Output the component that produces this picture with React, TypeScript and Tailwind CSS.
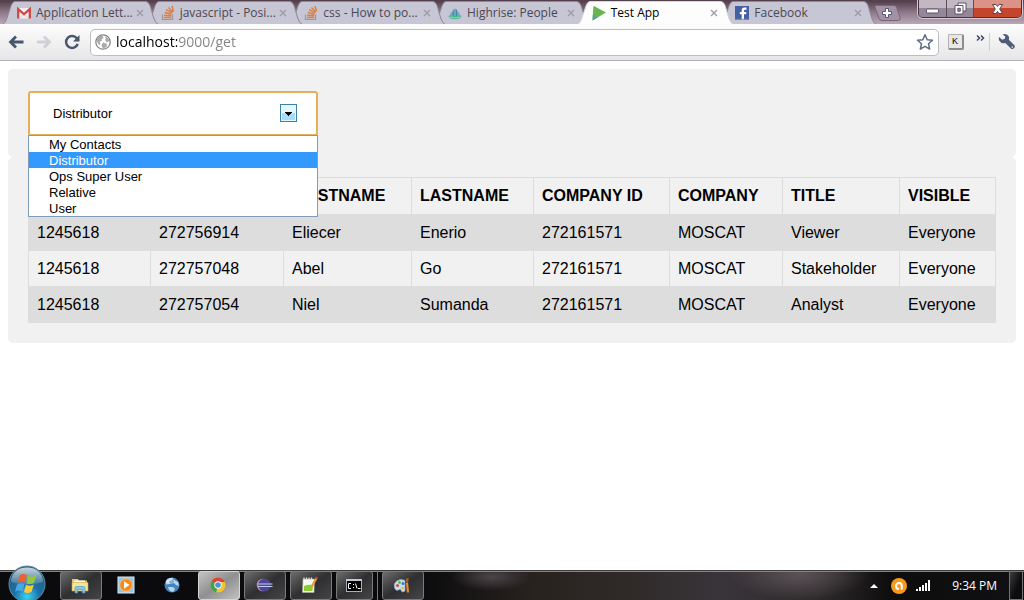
import React from "react";

type TabInfo = { title: string; icon: React.ReactNode; active?: boolean; z: string };

const GmailIcon = () => (
  <svg viewBox="0 0 16 16" className="h-4 w-4 shrink-0" aria-hidden="true">
    <rect x="1" y="3" width="14" height="10.500" rx="1" fill="#f0eef2" />
    <path d="M2.200 13.500V4l5.800 5.300L13.800 4v9.500" fill="none" stroke="#cf4440" strokeWidth="2.300" />
    <path d="M4.500 13l2.300-3.500M11.500 13L9.200 9.500" stroke="#d5c8cc" strokeWidth=".8" />
  </svg>
);

const StackIcon = () => (
  <svg viewBox="0 0 16 16" className="h-4 w-4 shrink-0" aria-hidden="true">
    <path d="M2.500 9.500v5h10v-5" fill="none" stroke="#9a959d" strokeWidth="1.200" />
    <g stroke="#df7d3d" strokeWidth="1.400">
      <path d="M4 12.500h7M4.200 10.300l7 .5M4.700 7.500l6.800 1.700M6 4.700l6 3.200M8.500 2.500l4.300 4.700M12 1l1.500 5.500" />
    </g>
  </svg>
);

const HighriseIcon = () => (
  <svg viewBox="0 0 16 16" className="h-4 w-4 shrink-0" aria-hidden="true">
    <ellipse cx="8" cy="11.500" rx="6.200" ry="2.800" fill="#52b592" />
    <path d="M3.500 11V8l2-1.500V5L8 3.500 10.500 5v1.500l2 1.500v3z" fill="#6fa6c2" />
    <path d="M6.300 6v5M9.500 5v6" stroke="#4a86a0" strokeWidth="1" />
    <path d="M3 12q5 1.800 10 0" stroke="#8fd0c5" fill="none" />
  </svg>
);

const PlayIcon = () => (
  <svg viewBox="0 0 16 16" className="h-4 w-4 shrink-0" aria-hidden="true">
    <path d="M2.500.8L15 7.500 1.500 15.500z" fill="#69b550" />
    <path d="M1.900 9l5 3.300-5.400 3.200z" fill="#5ba293" />
  </svg>
);

const FacebookIcon = () => (
  <svg viewBox="0 0 16 16" className="h-4 w-4 shrink-0" aria-hidden="true">
    <rect x="1" y="1" width="14" height="14" fill="#4560a0" />
    <path d="M10 15V9.300h2.200V7.100H10V5.700q0-1 1-1h1.500V2.500h-2.200Q7.700 2.500 7.700 5v2.100H5.800v2.200h1.900V15z" fill="#fff" />
    <path d="M1 14.300h14" stroke="#7690c6" />
  </svg>
);

const tabs: TabInfo[] = [
  { title: "Application Lett...", icon: <GmailIcon />, z: "z-[6]" },
  { title: "javascript - Posi...", icon: <StackIcon />, z: "z-[5]" },
  { title: "css - How to po...", icon: <StackIcon />, z: "z-[4]" },
  { title: "Highrise: People", icon: <HighriseIcon />, z: "z-[3]" },
  { title: "Test App", icon: <PlayIcon />, active: true, z: "z-[7]" },
  { title: "Facebook", icon: <FacebookIcon />, z: "z-[2]" },
];

function Tab({ title, icon, active, z }: TabInfo) {
  return (
    <div className={`relative h-6 min-w-0 flex-1 ${z}`}>
      <svg viewBox="0 0 157 24" preserveAspectRatio="none" className="absolute top-0 left-0 h-6 w-[calc(100%+13px)]" aria-hidden="true">
        <path
          d="M0 24.500C3 23.500 4 21 5 18L9 6Q10.500 1.500 13 1.500H144Q147 1.500 148.500 6L152 18Q154 24 157 24.500z"
          fill={active ? "#fdfdfd" : "#c7c6d4"}
          stroke={active ? "#d9d6dd" : "#8e8895"}
          strokeWidth="1"
        />
      </svg>
      <div className="relative flex h-6 items-center pt-0.5 pl-3.5">
        {icon}
        <button
          type="button"
          className={`ml-1 min-w-0 flex-1 text-left font-['Open_Sans','Noto_Sans',sans-serif] text-xs whitespace-nowrap ${active ? "text-black" : "text-[#4b4852]"}`}
        >
          {title}
        </button>
        <button type="button" aria-label={`Close ${title}`} className="flex h-3 w-3 shrink-0 items-center justify-center">
          <svg viewBox="0 0 8 8" className="h-2 w-2" aria-hidden="true">
            <path d="M1 1l6 6M7 1L1 7" stroke="#9f9ba6" strokeWidth="1.400" />
          </svg>
        </button>
      </div>
    </div>
  );
}

function WindowControls() {
  return (
    <div className="flex h-[18px] w-[104px] overflow-hidden rounded-b-[5px] border border-t-0 border-[#44343f] shadow-[0_0_0_1px_#d4c9d2]">
      <button type="button" aria-label="Minimize" className="flex w-7 items-center justify-center border-r border-[#5d4c59] bg-linear-to-b from-[#c3b7c2] from-45% to-[#95879a] to-50%">
        <svg viewBox="0 0 13 6" className="mt-1 h-1.5 w-[13px]" aria-hidden="true">
          <rect x=".5" y="1" width="12" height="4" rx="1" fill="#fff" stroke="#5b5567" />
        </svg>
      </button>
      <button type="button" aria-label="Restore" className="flex w-[27px] items-center justify-center border-r border-[#5d4c59] bg-linear-to-b from-[#c3b7c2] from-45% to-[#95879a] to-50%">
        <svg viewBox="0 0 13 13" className="h-[13px] w-[13px]" aria-hidden="true">
          <path d="M4 1h8v8H4z" fill="#fff" stroke="#5b5567" />
          <path d="M1 3.500h8V12H1z" fill="#fff" stroke="#5b5567" />
          <path d="M3.800 6.300h2.500v3H3.800z" fill="#9a8c9b" stroke="#5b5567" />
        </svg>
      </button>
      <button type="button" aria-label="Close window" className="flex flex-1 items-center justify-center bg-linear-to-b from-[#dc9387] from-45% to-[#c5452c] to-50%">
        <svg viewBox="0 0 13 12" className="h-3 w-[13px]" aria-hidden="true">
          <path d="M1.500 1.500H5l1.500 2 1.500-2h3.500L8.700 6l2.800 4.500H8l-1.500-2-1.500 2H1.500L4.300 6z" fill="#fff" stroke="#5c4450" />
        </svg>
      </button>
    </div>
  );
}

function TabStrip() {
  return (
    <header className="flex h-6 bg-linear-to-b from-[#54404d] from-5% via-[#8d7788] to-[#b9a9b8] pl-0.5">
      <nav aria-label="Tabs" className="isolate flex min-w-0 flex-1">
        {tabs.map((t) => (
          <Tab key={t.title} {...t} />
        ))}
      </nav>
      <div className="flex w-40 shrink-0 justify-between pr-0.5 pl-2.5">
        <button type="button" aria-label="New tab" className="mt-[5px] h-4 w-7">
          <svg viewBox="0 0 28 16" className="h-4 w-7" aria-hidden="true">
            <path d="M1.500.5H20q2 0 2.600 2L26 12.500q.8 3-1.500 3H8q-2.200 0-3-2L1 2Q.5.5 1.500.5z" fill="#a292a4" stroke="#776679" />
            <path d="M11.500 3.500h3v3h3v3h-3v3h-3v-3h-3v-3h3z" fill="#fff" stroke="#515a7a" />
          </svg>
        </button>
        <WindowControls />
      </div>
    </header>
  );
}

function Toolbar() {
  return (
    <div className="flex h-[37px] items-center border-b border-[#b2b2ba] bg-linear-to-b from-[#fdfdfd] to-[#e6e6e8] pr-2 pl-2">
      <button type="button" aria-label="Back" className="h-4 w-4">
        <svg viewBox="0 0 16 16" className="h-4 w-4" aria-hidden="true">
          <path d="M8 2.500L2.500 8 8 13.500M3 8h12.500" fill="none" stroke="#48556f" strokeWidth="2.800" />
        </svg>
      </button>
      <button type="button" aria-label="Forward" className="ml-3 h-4 w-4">
        <svg viewBox="0 0 16 16" className="h-4 w-4" aria-hidden="true">
          <path d="M8 2.500L13.500 8 8 13.500M13 8H1" fill="none" stroke="#cfd1d7" strokeWidth="2.800" />
        </svg>
      </button>
      <button type="button" aria-label="Reload" className="ml-3 h-4 w-4">
        <svg viewBox="0 0 16 16" className="h-4 w-4" aria-hidden="true">
          <path d="M13 4.500A6 6 0 1 0 13.700 10" fill="none" stroke="#48556f" strokeWidth="2.500" />
          <path d="M15.500 1v6.500H9z" fill="#48556f" />
        </svg>
      </button>
      <div className="ml-2.5 flex h-[27px] min-w-0 flex-1 items-center rounded-[5px] border border-[#bdbdc1] bg-white pr-1 pl-1">
        <svg viewBox="0 0 16 16" className="h-4 w-4 shrink-0" aria-hidden="true">
          <circle cx="8" cy="8" r="7.200" fill="#fff" stroke="#858585" strokeWidth="1.300" />
          <path d="M2 5q2-3.500 5.500-3.500L8.500 4 6.500 5.500 7 7 4.500 7.500 5.500 10 4 11Q1.300 8 2 5zM9.500 2.500q4 .8 4.700 4.500L12 8.500 10 6 11 4.500zM8 8.500l4 1.500-.5 3-3.500 1.500-1.500-3z" fill="#a9a9a9" />
        </svg>
        <input
          type="text"
          aria-label="Address"
          defaultValue="localhost:9000/get"
          className="ml-[5px] min-w-0 flex-1 bg-[linear-gradient(to_right,#000_61px,#838383_61px)] bg-clip-text font-['Open_Sans','Noto_Sans',sans-serif] text-sm text-transparent outline-none"
        />
        <button type="button" aria-label="Bookmark" className="h-[18px] w-[18px]">
          <svg viewBox="0 0 18 18" className="h-[18px] w-[18px]" aria-hidden="true">
            <path d="M9 1.800l2.200 4.900 5.300.5-4 3.600 1.200 5.300L9 13.300l-4.700 2.800 1.200-5.300-4-3.600 5.300-.5z" fill="#fff" stroke="#5c6c89" strokeWidth="1.500" strokeLinejoin="round" />
          </svg>
        </button>
      </div>
      <button type="button" aria-label="Keyboard extension" className="ml-[9px] flex h-4 w-4 items-start rounded-[2px] border border-r-2 border-b-2 border-[#b0b0b0] border-r-[#8c8c8c] border-b-[#8c8c8c] bg-[#e8e8e6] pl-[3px] font-['Liberation_Sans',sans-serif] text-[9px] leading-[12px] text-black">
        K
      </button>
      <button type="button" aria-label="More extensions" className="mb-2 ml-3 h-2 w-[9px]">
        <svg viewBox="0 0 9 8" className="h-2 w-[9px]" aria-hidden="true">
          <path d="M1 1.500L3.500 4 1 6.500M5 1.500L7.500 4 5 6.500" fill="none" stroke="#3f4b68" strokeWidth="1.500" />
        </svg>
      </button>
      <span className="ml-1 h-[18px] w-px bg-[#cfcfd2]" />
      <button type="button" aria-label="Settings" className="ml-2 h-[18px] w-[18px]">
        <svg viewBox="0 0 18 18" className="h-[18px] w-[18px]" aria-hidden="true">
          <path d="M4.500 1.500Q9-.2 10.800 3.500q.6 1.800 0 3.200l5.600 5.600q1 1.500-.4 3-1.600 1.400-3.100.2L7.300 10Q3 11 1.200 7.500.5 5.500 1 4l3.200 2.700 2.600-.9.500-2.300z" fill="#4d5c7b" />
          <circle cx="14.300" cy="14" r=".8" fill="#fff" />
        </svg>
      </button>
    </div>
  );
}

const groups = ["My Contacts", "Distributor", "Ops Super User", "Relative", "User"];

function GroupPicker() {
  return (
    <div className="relative w-[290px] text-[13px]">
      <select
        aria-label="Group"
        defaultValue="Distributor"
        className="block h-[45px] w-full appearance-none rounded-[3px] border-2 border-[#e5b05c] bg-white pl-[23px] text-black outline-none"
      >
        {groups.map((g) => (
          <option key={g}>{g}</option>
        ))}
      </select>
      <svg viewBox="0 0 17 18" className="pointer-events-none absolute top-[13px] right-[21px] h-[18px] w-[17px]" aria-hidden="true">
        <rect x=".5" y=".5" width="16" height="17" fill="#e5f6fd" stroke="#3c7fb1" />
        <rect x="2" y="9" width="13" height="7" fill="#aadcf6" />
        <path d="M5 8h7v1h-1v1h-1v1H9v1H8v-1H7v-1H6V9H5z" fill="#000" />
      </svg>
      <ul role="listbox" aria-label="Group options" className="absolute top-11 left-0 z-10 w-full border border-[#7f9db9] bg-white text-black">
        {groups.map((g) => (
          <li
            key={g}
            role="option"
            aria-selected={g === "Distributor"}
            className={`h-4 pl-5 leading-[18px] ${g === "Distributor" ? "bg-[#3399ff] text-white" : ""}`}
          >
            {g}
          </li>
        ))}
      </ul>
    </div>
  );
}

const headers = ["", "", "FIRSTNAME", "LASTNAME", "COMPANY ID", "COMPANY", "TITLE", "VISIBLE"];
const colWidths = ["w-[122px]", "w-[133px]", "w-[128px]", "w-[122px]", "w-[136px]", "w-[113px]", "w-[117px]", "w-[96px]"];
const rows = [
  ["1245618", "272756914", "Eliecer", "Enerio", "272161571", "MOSCAT", "Viewer", "Everyone"],
  ["1245618", "272757048", "Abel", "Go", "272161571", "MOSCAT", "Stakeholder", "Everyone"],
  ["1245618", "272757054", "Niel", "Sumanda", "272161571", "MOSCAT", "Analyst", "Everyone"],
];

function ContactsTable() {
  return (
    <table className="w-full table-fixed border-collapse text-left text-base text-black">
      <colgroup>
        {colWidths.map((w, i) => (
          <col key={i} className={w} />
        ))}
      </colgroup>
      <thead>
        <tr className="h-[37px]">
          {headers.map((h, i) => (
            <th key={i} scope="col" className="border border-[#ddd] px-2 font-bold whitespace-nowrap">
              {h}
            </th>
          ))}
        </tr>
      </thead>
      <tbody>
        {rows.map((r) => (
          <tr key={r[1]} className="h-9 odd:bg-[#ddd]">
            {r.map((c, i) => (
              <td key={i} className="border border-[#ddd] px-2 whitespace-nowrap">
                {c}
              </td>
            ))}
          </tr>
        ))}
      </tbody>
    </table>
  );
}

const ExplorerIcon = () => (
  <svg viewBox="0 0 18 18" className="h-[18px] w-[18px]" aria-hidden="true">
    <path d="M1 3h6l1 1.500h8V15H1z" fill="#e5c768" />
    <path d="M3 4.500h11V7H3z" fill="#fafafa" />
    <path d="M1 6.500h16V15H1z" fill="#f5e397" stroke="#c9a94f" strokeWidth=".6" />
    <path d="M4 17v-5q0-1.500 1.500-1.500h7q1.500 0 1.500 1.500v5h-2.500v-3.500h-5V17z" fill="#85c5ea" stroke="#4c93bd" strokeWidth=".6" />
  </svg>
);

const MediaIcon = () => (
  <svg viewBox="0 0 18 18" className="h-[18px] w-[18px]" aria-hidden="true">
    <rect x="1" y="1" width="16" height="16" fill="#91c5e8" stroke="#d5ebf8" />
    <circle cx="9" cy="9" r="6.300" fill="#f58a18" stroke="#fbc27c" />
    <path d="M7 5.300L12.500 9 7 12.700z" fill="#fff" />
  </svg>
);

const GlobeIcon = () => (
  <svg viewBox="0 0 18 18" className="h-[18px] w-[18px]" aria-hidden="true">
    <circle cx="9" cy="9" r="7.500" fill="#4484bd" />
    <path d="M3 5q3-3.500 7-3.300L9 4 6 5.500 7 8 3 8.500zM11 4l4 2 1 4-3-1-2-2zM5 11l5 0 2 2-2 3q-4-.5-5-5z" fill="#b5d7ed" />
    <ellipse cx="7.500" cy="5" rx="4.500" ry="3" fill="#fff" opacity=".35" />
  </svg>
);

const ChromeIcon = () => (
  <svg viewBox="0 0 18 18" className="h-[18px] w-[18px]" aria-hidden="true">
    <circle cx="9" cy="9" r="7.500" fill="#f2c42f" />
    <path d="M9 9L2.500 5.200A7.500 7.500 0 0 1 15.800 6H9z" fill="#dc4235" />
    <path d="M9 9l-1.800 7.300A7.500 7.500 0 0 1 2.500 5.200z" fill="#42a348" />
    <circle cx="9" cy="9" r="3.700" fill="#fff" />
    <circle cx="9" cy="9" r="2.800" fill="#4b91dc" />
  </svg>
);

const EclipseIcon = () => (
  <svg viewBox="0 0 18 18" className="h-[18px] w-[18px]" aria-hidden="true">
    <circle cx="8" cy="9" r="6.300" fill="#c98bb0" />
    <circle cx="9.500" cy="9" r="6.300" fill="#4b479b" />
    <path d="M3 8h14.500M3 10.500h14.500" stroke="#c3cdf0" strokeWidth="1.200" />
  </svg>
);

const NotepadIcon = () => (
  <svg viewBox="0 0 18 18" className="h-[18px] w-[18px]" aria-hidden="true">
    <path d="M2 3h11.500l-.5 13.500H1.500z" fill="#f8faf3" stroke="#a8b0a0" strokeWidth=".6" />
    <path d="M3 10q4-2 9-1l-.5 6H2.800z" fill="#8dcc35" />
    <path d="M3 3V1.500M5.500 3V1.500M8 3V1.500M10.500 3V1.500" stroke="#ddd" strokeWidth="1.200" />
    <path d="M15.500 2l-5 9" stroke="#e89c35" strokeWidth="2.300" />
    <path d="M15 2.800l1-1.800" stroke="#c63f32" strokeWidth="2.500" />
  </svg>
);

const ConsoleIcon = () => (
  <svg viewBox="0 0 18 18" className="h-[18px] w-[18px]" aria-hidden="true">
    <rect x="1.500" y="3.500" width="15" height="12" fill="#000" stroke="#aab0b8" />
    <path d="M1 4h16" stroke="#c4cad5" strokeWidth="2" />
    <path d="M6 7.500H3.500v5H6M8.500 8v1M8.500 11v1M10.500 7.500l1.500 5M13 12.500h2.500" fill="none" stroke="#fff" />
  </svg>
);

const PaintIcon = () => (
  <svg viewBox="0 0 18 18" className="h-[18px] w-[18px]" aria-hidden="true">
    <path d="M1.500 12Q0 7.500 4 4.800 8 2.500 12 4.500V15q-3 2-4-.5-.6-2-2.500-.5-2.500 1.500-4-2z" fill="#c5def0" stroke="#82abc9" strokeWidth=".7" />
    <circle cx="4.500" cy="9.500" r="1.600" fill="#d94f3d" />
    <circle cx="6.500" cy="6.500" r="1.400" fill="#61b04a" />
    <circle cx="10" cy="7.500" r="1.500" fill="#3877c7" />
    <circle cx="9.500" cy="12" r="1.600" fill="#ecc33a" />
    <path d="M14 7l1 9.500" stroke="#e98a2c" strokeWidth="2.200" />
    <path d="M12.800 2.500l3-.5-.8 5h-1.500z" fill="#a85e2c" />
  </svg>
);

function TaskButton({ label, open, active, children }: { label: string; open?: boolean; active?: boolean; children: React.ReactNode }) {
  const look = active
    ? "border-[#d5d5d5] bg-linear-to-br from-[#c4c4c4] via-[#8f8f8f] to-[#c2c2c2]"
    : open
      ? "border-[#7b7b7b] bg-linear-to-br from-[#6d6d6d] via-[#2f2f31] to-[#454547]"
      : "border-transparent";
  return (
    <button type="button" aria-label={label} className={`flex h-[29px] w-[42px] items-center justify-center rounded-[3px] border pr-0.5 pb-0.5 ${look}`}>
      {children}
    </button>
  );
}

function Taskbar() {
  return (
    <footer className="relative flex h-[30px] border-t border-[#3b3b3b] bg-[radial-gradient(ellipse_70px_26px_at_78%_10%,#5b5257_0%,transparent_100%),radial-gradient(ellipse_40px_14px_at_48%_20%,#4b4548_0%,transparent_100%),linear-gradient(to_right,#0b0b0d_0%,#0b0b0d_41%,#28221f_52%,#302b29_62%,#39343a_70%,#2e2a2b_80%,#0e0d0e_87%,#101012_100%)] shadow-[inset_0_1px_0_#8a8585]">
      <button type="button" aria-label="Start" className="absolute bottom-[-3px] left-2 h-[38px] w-[38px]">
        <svg viewBox="0 0 38 38" className="h-[38px] w-[38px]" aria-hidden="true">
          <defs>
            <radialGradient id="orb" cx="50%" cy="85%" r="80%">
              <stop offset="0" stopColor="#39d3f7" />
              <stop offset=".45" stopColor="#1c6fa5" />
              <stop offset="1" stopColor="#2b5876" />
            </radialGradient>
            <linearGradient id="shine" x1="0" y1="0" x2="0" y2="1">
              <stop offset="0" stopColor="#fff" stopOpacity=".75" />
              <stop offset="1" stopColor="#fff" stopOpacity=".12" />
            </linearGradient>
          </defs>
          <circle cx="19" cy="19" r="18" fill="url(#orb)" stroke="#5d8fa8" />
          <path d="M3 17Q4 3 19 2.500 34 3 35 17 19 22 3 17z" fill="url(#shine)" />
          <path d="M11.500 10.500q3.500-2.500 7.500-.5l-2 7.500q-3.500-2-7.500.5z" fill="#ee6030" />
          <path d="M20.300 10.800q4 2 8-.5l-2.200 7.500q-4 2.300-7.800.4z" fill="#93c83e" />
          <path d="M9 19.500q4-2.300 7.500-.5l-2 7.300q-4-2-7.500.5z" fill="#48a7e8" />
          <path d="M18 19.800q4 2 7.800-.3l-2.200 7.300q-4 2.300-7.700.3z" fill="#fac935" />
        </svg>
      </button>
      <nav aria-label="Taskbar" className="flex gap-1 pl-[60px]">
        <TaskButton label="Explorer" open><ExplorerIcon /></TaskButton>
        <TaskButton label="Media Player"><MediaIcon /></TaskButton>
        <TaskButton label="Browser"><GlobeIcon /></TaskButton>
        <TaskButton label="Chrome" active><ChromeIcon /></TaskButton>
        <TaskButton label="Eclipse" open><EclipseIcon /></TaskButton>
        <TaskButton label="Notepad" open><NotepadIcon /></TaskButton>
        <div className="flex w-[42px] border-r border-[#777] pr-1">
          <button type="button" aria-label="Command Prompt" className="flex h-[29px] flex-1 items-center justify-center rounded-[3px] border border-[#7b7b7b] bg-linear-to-br from-[#6d6d6d] via-[#2f2f31] to-[#454547] pr-0.5 pb-0.5">
            <ConsoleIcon />
          </button>
        </div>
        <TaskButton label="Paint" open><PaintIcon /></TaskButton>
      </nav>
      <div className="ml-auto flex items-center">
        <button type="button" aria-label="Show hidden icons" className="h-2 w-2">
          <svg viewBox="0 0 8 8" className="h-2 w-2" aria-hidden="true">
            <path d="M0 6L4 2l4 4z" fill="#fff" />
          </svg>
        </button>
        <svg viewBox="0 0 16 16" className="ml-[13px] h-4 w-4" aria-hidden="true">
          <circle cx="8" cy="8" r="8" fill="#f79a1c" />
          <path d="M10.800 11.500V8a2.900 2.900 0 1 0-2.900 2.900" fill="none" stroke="#fff" strokeWidth="2" />
        </svg>
        <svg viewBox="0 0 14 11" className="ml-[9px] h-[11px] w-3.5" aria-hidden="true">
          <path d="M0 9h2v2H0zM3 7h2v4H3zM6 5h2v6H6zM9 3h2v8H9zM12 0h2v11h-2z" fill="#fff" />
        </svg>
        <time className="ml-[22px] font-['Open_Sans','Noto_Sans',sans-serif] text-xs text-white">9:34 PM</time>
        <button type="button" aria-label="Show desktop" className="mr-px ml-3 h-[29px] w-3.5 border border-[#737373] bg-linear-to-br from-[#3d3d3d] to-[#0c0c0e] to-60%" />
      </div>
    </footer>
  );
}

export default function App() {
  return (
    <div className="flex min-h-screen flex-col bg-white">
      <TabStrip />
      <Toolbar />
      <main className="flex-1 p-2 font-['Liberation_Sans',Arial,sans-serif]">
        <section className="rounded-[5px] bg-[#f1f1f1] px-5 pt-[22px] pb-[21px]">
          <GroupPicker />
        </section>
        <section className="rounded-[5px] bg-[#f1f1f1] p-5">
          <ContactsTable />
        </section>
      </main>
      <Taskbar />
    </div>
  );
}
